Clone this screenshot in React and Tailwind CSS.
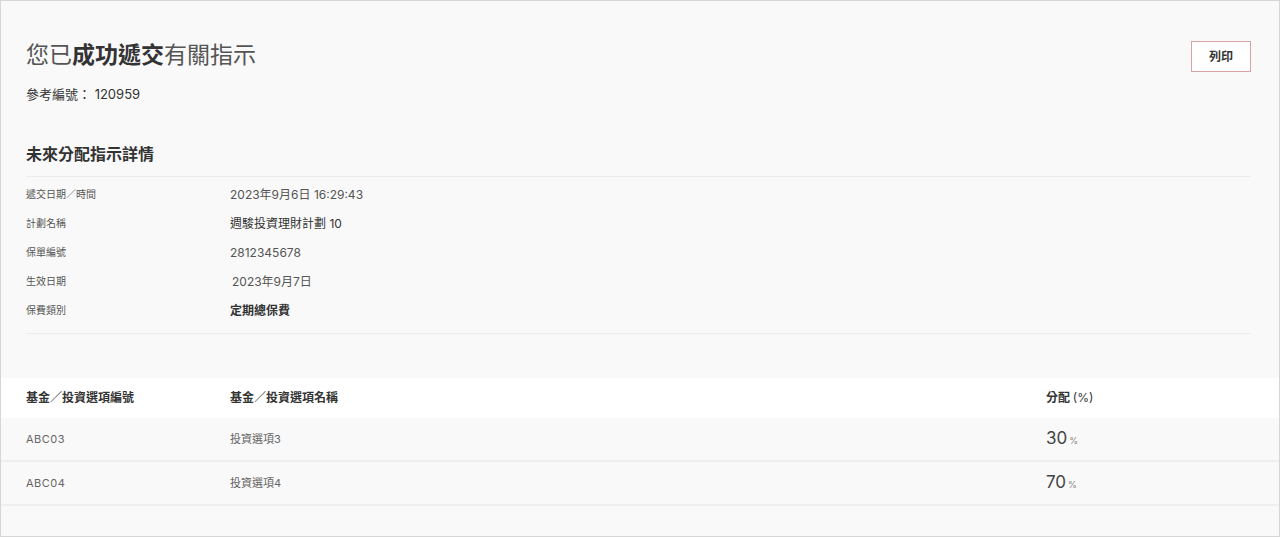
import React from 'react';

const details = [
    { label: "遞交日期／時間", value: "2023年9月6日 16:29:43" },
    { label: "計劃名稱", value: "週駿投資理財計劃 10", dark: true },
    { label: "保單編號", value: "2812345678" },
    { label: "生效日期", value: "2023年9月7日", indent: true },
    { label: "保費類別", value: "定期總保費", strong: true },
];

const funds = [
    { id: "ABC03", name: "投資選項3", pct: 30 },
    { id: "ABC04", name: "投資選項4", pct: 70 },
];

const font = { fontFamily: 'Inter, "Noto Sans CJK TC", sans-serif' };

const App = () => {
    return (
        <div style={font} className="w-[1280px] h-[537px] border border-[#d6d6d6] bg-[#f9f9f9] text-[#333] overflow-hidden">
            {/* header */}
            <div className="pl-[25px] pr-[28px] pt-[39px] flex justify-between items-start">
                <div>
                    <h1 className="text-[23px] leading-[30px] text-[#555]">
                        您已<span className="font-bold text-[#333]">成功遞交</span>有關指示
                    </h1>
                    <p className="mt-[14px] text-[13px] leading-[20px] text-[#333]">參考編號： 120959</p>
                </div>
                <button className="mt-[1px] w-[60px] h-[31px] border border-[#d9a3a3] bg-white text-[12px] font-bold text-[#333]">列印</button>
            </div>

            {/* details */}
            <div className="pl-[25px] pr-[28px] mt-[39px]">
                <h2 className="text-[16px] leading-[22px] font-bold pb-[11px] border-b border-[#ececec]">未來分配指示詳情</h2>
                <div className="pt-[3px] pb-[8px] border-b border-[#ececec]">
                    {details.map((d, i) => (
                        <div key={i} className="h-[29px] flex items-center">
                            <span className="w-[204px] text-[10px] text-[#555]">{d.label}</span>
                            <span className={`text-[12px] ${d.indent ? "pl-[2px]" : ""} ${d.strong ? "font-semibold text-[#333]" : d.dark ? "text-[#333]" : "text-[#555]"}`}>{d.value}</span>
                        </div>
                    ))}
                </div>
            </div>

            {/* table */}
            <div className="mt-[44px]">
                <div className="h-[40px] bg-white flex items-center pl-[25px] text-[12px] font-bold text-[#333]">
                    <span className="w-[204px]">基金／投資選項編號</span>
                    <span className="w-[816px]">基金／投資選項名稱</span>
                    <span>分配 <span className="font-normal">(%)</span></span>
                </div>
                {funds.map((f) => (
                    <div key={f.id} className="h-[44px] flex items-center pl-[25px] border-b-2 border-[#efefef] text-[11px] text-[#666]">
                        <span className="w-[204px] tracking-[0.5px]">{f.id}</span>
                        <span className="w-[816px]">{f.name}</span>
                        <span className="text-[17px] text-[#444]">{f.pct}<span className="text-[9px] text-[#888] ml-[2px]">%</span></span>
                    </div>
                ))}
            </div>
        </div>
    );
};

export default App;
